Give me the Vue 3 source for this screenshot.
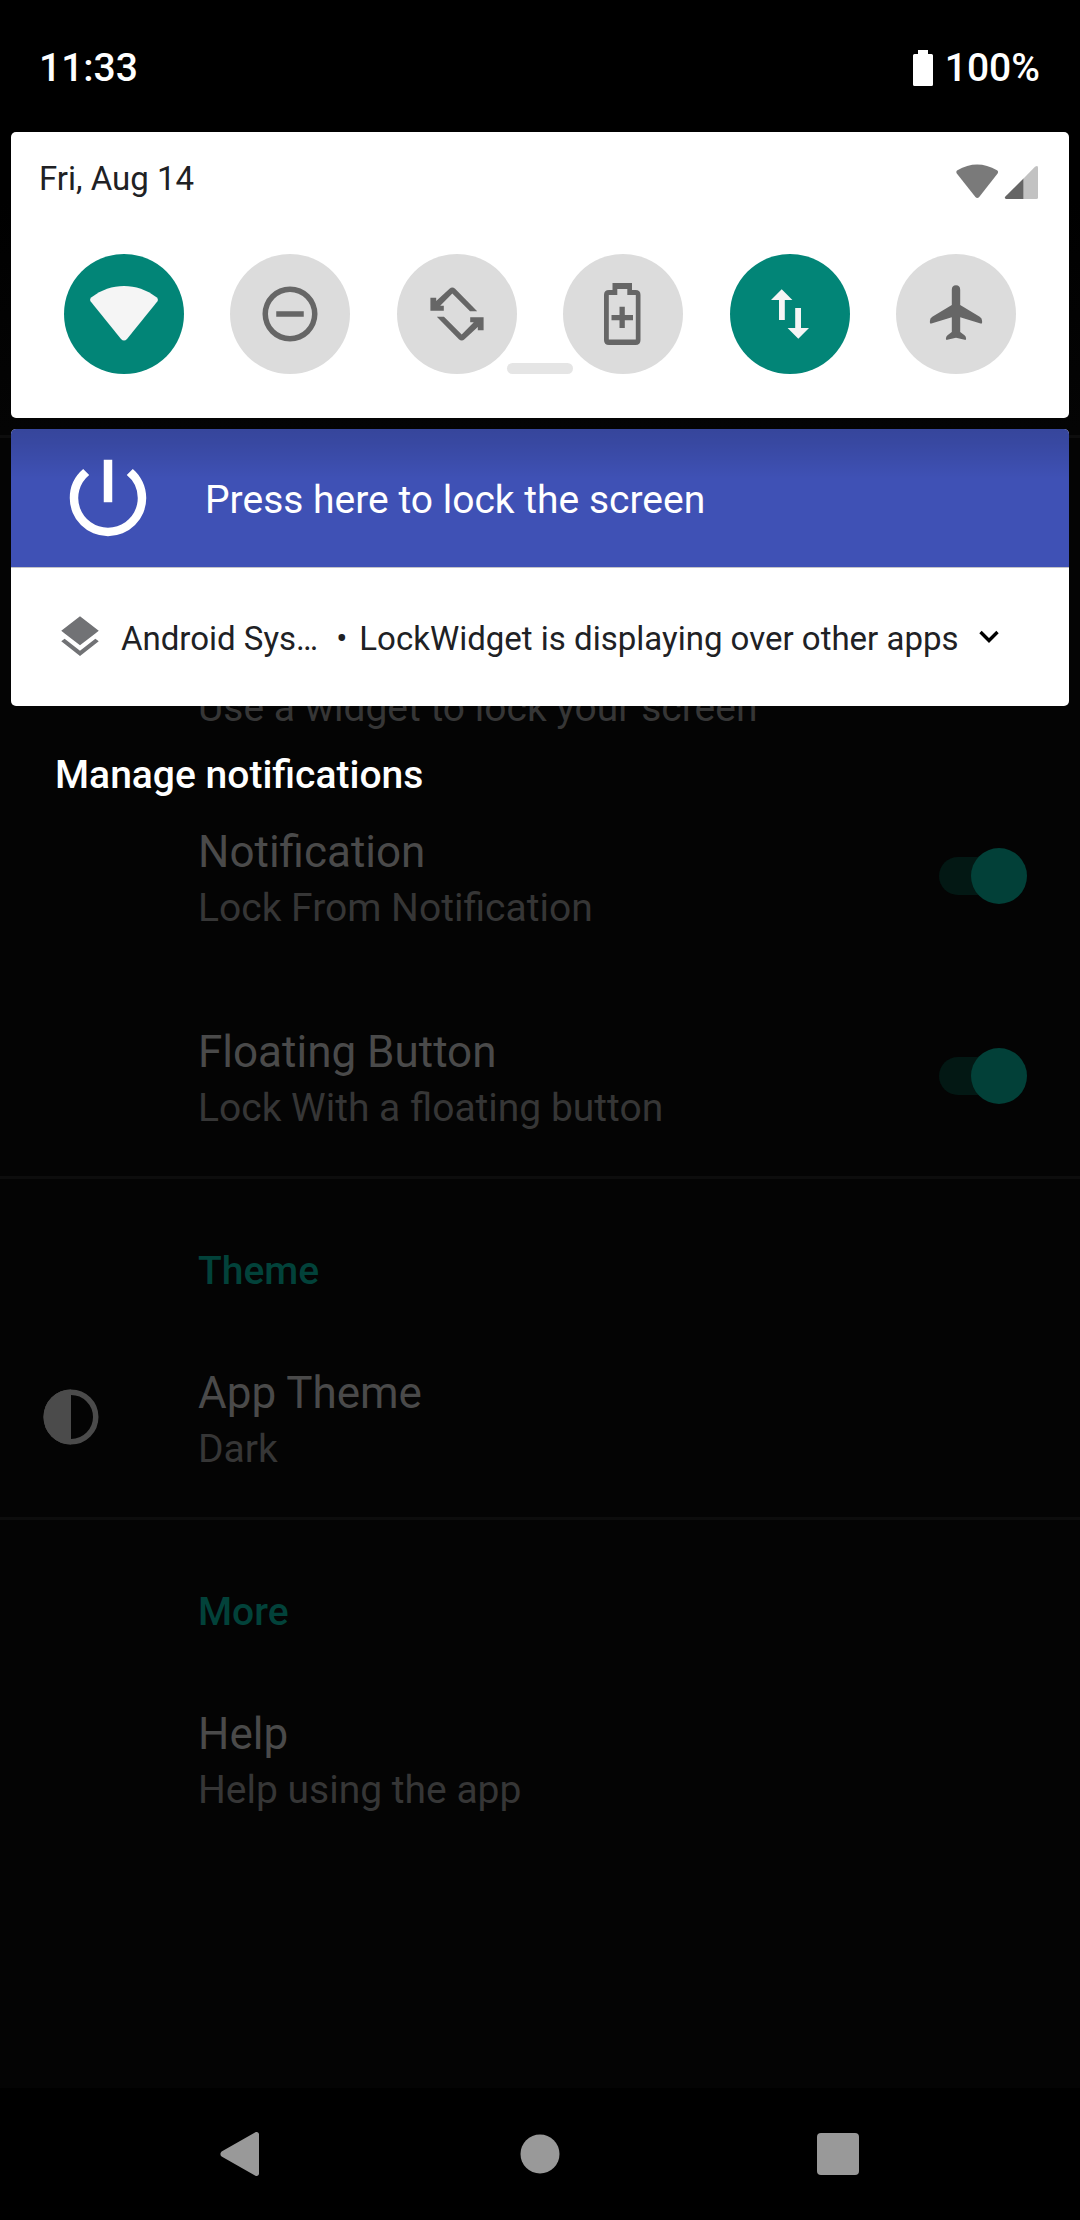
<script setup>
import { ref } from 'vue'

const tiles = ref([
  { id: 'wifi', label: 'Wi-Fi', on: true },
  { id: 'dnd', label: 'Do Not Disturb', on: false },
  { id: 'rotate', label: 'Auto-rotate', on: false },
  { id: 'saver', label: 'Battery Saver', on: false },
  { id: 'data', label: 'Mobile data', on: true },
  { id: 'airplane', label: 'Airplane mode', on: false }
])

const switches = ref([
  { id: 'notification', title: 'Notification', summary: 'Lock From Notification', on: true },
  { id: 'floating', title: 'Floating Button', summary: 'Lock With a floating button', on: true }
])
</script>

<template>
  <div class="screen">
    <main class="settings">
      <section class="group first">
        <div class="row">
          <div class="text"><span class="summary">Use a widget to lock your screen</span></div>
        </div>
        <div v-for="s in switches" :key="s.id" class="row">
          <label class="text" :for="s.id">
            <span class="title">{{ s.title }}</span>
            <span class="summary">{{ s.summary }}</span>
          </label>
          <input :id="s.id" v-model="s.on" class="switch" type="checkbox" role="switch" />
        </div>
      </section>

      <section class="group">
        <h2 class="category">Theme</h2>
        <div class="row">
          <svg class="lead" viewBox="0 0 24 24" aria-hidden="true">
            <circle cx="12" cy="12" r="9" fill="none" stroke="currentColor" stroke-width="2" />
            <path d="M12 2a10 10 0 0 0 0 20z" fill="currentColor" />
          </svg>
          <div class="text">
            <span class="title">App Theme</span>
            <span class="summary">Dark</span>
          </div>
        </div>
      </section>

      <section class="group">
        <h2 class="category">More</h2>
        <div class="row">
          <div class="text">
            <span class="title">Help</span>
            <span class="summary">Help using the app</span>
          </div>
        </div>
      </section>
    </main>

    <nav class="navbar">
      <button type="button" aria-label="Back">
        <svg viewBox="0 0 66 66"><path d="M12.6 35.6a3.4 3.4 0 0 1 0-5.2L46 11.6c2-1.2 4-.2 4 2v39c0 2.200-2 3.200-4 2z" /></svg>
      </button>
      <button type="button" aria-label="Home">
        <svg viewBox="0 0 66 66"><circle cx="33" cy="33" r="19.500" /></svg>
      </button>
      <button type="button" aria-label="Overview">
        <svg viewBox="0 0 66 66"><rect x="12" y="12" width="42" height="42" rx="4" /></svg>
      </button>
    </nav>

    <div class="shade">
      <header class="statusbar">
        <time>11:33</time>
        <div class="battery">
          <svg viewBox="0 0 20 36" aria-hidden="true"><path d="M5 0h10v4h3.500q1.500 0 1.500 1.500v29q0 1.500-1.500 1.500h-17Q0 36 0 34.500v-29Q0 4 1.500 4H5z" /></svg>
          <span>100%</span>
        </div>
      </header>

      <section class="panel">
        <div class="panel-head">
          <span class="date">Fri, Aug 14</span>
          <svg class="signal" viewBox="0 0 82 36" aria-hidden="true">
            <path d="M.8 9.500Q-.4 7.600 1.400 6.300 21-5.300 41 6.300q1.800 1.300.6 3.200L23.200 33q-1.900 2-3.800 0z" fill="#7a7a7a" />
            <path d="M67.500 14.500 79 2.800q3-2 3 .8v29.800q0 1.600-1.600 1.600H67.500z" fill="#c2c2c2" />
            <path d="M67.500 14.500V35H50.200q-2.400-.6-.8-2.600z" fill="#656565" />
          </svg>
        </div>
        <div class="tiles">
          <button v-for="t in tiles" :key="t.id" type="button" class="tile" :class="{ on: t.on }" :aria-label="t.label" :aria-pressed="t.on" @click="t.on = !t.on">
            <svg v-if="t.id === 'wifi'" class="wide" viewBox="0 0 70 66">
              <path d="M1.700 20.600Q.2 18.200 2.500 16.300C22 1.200 48 1.200 67.500 16.300q2.300 1.900.8 4.300L38 58q-3 3.200-6 0z" />
            </svg>
            <svg v-else-if="t.id === 'dnd'" viewBox="0 0 24 24">
              <path fill-rule="evenodd" d="M12 2a10 10 0 1 0 0 20 10 10 0 0 0 0-20zm0 2a8 8 0 1 1 0 16 8 8 0 0 1 0-16zM7 11h10v2H7z" />
            </svg>
            <svg v-else-if="t.id === 'rotate'" viewBox="0 0 66 66">
              <path d="M12.200 20 25.500 7.700q2.800-2.400 5.600 0L53.200 30.300H46L28.300 12.600 16.200 24.800h3.600v5H6.400V16.700h5.800z" />
              <path transform="rotate(180 33 33)" d="M12.200 20 25.500 7.700q2.800-2.400 5.600 0L53.200 30.300H46L28.300 12.600 16.200 24.800h3.600v5H6.400V16.700h5.800z" />
            </svg>
            <svg v-else-if="t.id === 'saver'" viewBox="0 0 66 66">
              <path fill-rule="evenodd" d="M22.500 2H42v7h3.500q5 0 5 5v45q0 5-5 5H19q-5 0-5-5V14q0-5 5-5h3.500zM27.300 8v6h-8.500v44.500h27V14h-8.500V8zM29.500 25.800h5.300V34H43v5.200h-8.200v7.700h-5.300v-7.700h-8V34h8z" />
            </svg>
            <svg v-else-if="t.id === 'data'" viewBox="0 0 66 66">
              <path d="M24.700 8.300 35.400 19h-7.600v20H22V19h-8z" />
              <path transform="rotate(180 33 33)" d="M24.700 8.300 35.400 19h-7.600v20H22V19h-8z" />
            </svg>
            <svg v-else viewBox="0 0 66 66">
              <path d="M33 4.200q4.200.2 4.200 4.500V24l19.500 11.800q2.400 1.500 2.400 4.200v1.400q0 1.500-1.500 1.100L37.200 36.200V51l4.300 3.200q1.700 1.300 1.600 3.600 0 1.400-1.400 1L33 56.700l-8.700 2.100q-1.400.4-1.400-1 0-2.300 1.600-3.600l4.300-3.200V36.200L8.400 42.500q-1.500.4-1.500-1.100V40q0-2.700 2.400-4.200L28.800 24V8.700q0-4.300 4.200-4.500z" />
            </svg>
          </button>
        </div>
        <div class="handle"></div>
      </section>

      <section class="notifications">
        <button type="button" class="lock">
          <svg viewBox="0 0 24 24" aria-hidden="true">
            <path d="M13 3h-2v10h2V3zm4.830 2.170-1.420 1.420A6.920 6.920 0 0 1 19 12c0 3.870-3.130 7-7 7A6.995 6.995 0 0 1 7.580 6.580L6.170 5.170A8.932 8.932 0 0 0 3 12a9 9 0 0 0 18 0c0-2.740-1.230-5.180-3.170-6.830z" />
          </svg>
          <span>Press here to lock the screen</span>
        </button>
        <button type="button" class="system">
          <svg class="layers" viewBox="0 0 24 24" aria-hidden="true">
            <path d="m11.990 18.540-7.370-5.730L3 14.070l9 7 9-7-1.630-1.270-7.380 5.740zM12 16l7.360-5.730L21 9l-9-7-9 7 1.630 1.270L12 16z" />
          </svg>
          <span class="app">Android Sys…</span>
          <span class="dot">•</span>
          <span>LockWidget is displaying over other apps</span>
          <svg class="chevron" viewBox="0 0 20 14" aria-hidden="true"><path d="M1.500 2 10 10.500 18.500 2" fill="none" stroke="#000" stroke-width="3.400" /></svg>
        </button>
      </section>

      <button type="button" class="manage">Manage notifications</button>
    </div>
  </div>
</template>

<style>
body {
  margin: 0;
  background: #000;
}
</style>

<style scoped>
.screen {
  position: relative;
  display: flex;
  flex-direction: column;
  min-height: 100vh;
  font-family: Roboto, sans-serif;
  font-size: 39px;
  line-height: 46px;
}

button {
  margin: 0;
  padding: 0;
  border: 0;
  background: none;
  color: inherit;
  font: inherit;
  text-align: left;
}

svg {
  display: block;
  flex: none;
  fill: currentColor;
}

/* Settings list behind the shade */
.settings {
  flex: 1;
  padding-top: 435px;
  background: linear-gradient(#000 200px, #040404 430px);
}

.group {
  border-top: 3px solid #0d0d0d;
}

.first {
  padding-top: 138px;
}

.category {
  margin: 0;
  padding: 69px 44px 23px 198px;
  color: #02423a;
  font-size: 39px;
  font-weight: 500;
}

.row {
  display: flex;
  align-items: center;
  min-height: 200px;
  padding-right: 53px;
}

.lead {
  width: 66px;
  height: 66px;
  margin: 0 -104px 0 38px;
  color: #4b4b4b;
}

.text {
  display: flex;
  flex: 1;
  flex-direction: column;
  justify-content: flex-end;
  box-sizing: border-box;
  height: 200px;
  padding: 0 0 38px 198px;
}

.title {
  color: #4a4a4a;
  font-size: 44px;
  line-height: 52px;
}

.summary {
  color: #363636;
  line-height: 60px;
}

.switch {
  display: grid;
  align-items: center;
  width: 88px;
  height: 56px;
  margin: 0;
  appearance: none;
}

.switch::before,
.switch::after {
  grid-area: 1 / 1;
  content: '';
}

.switch::before {
  width: 80px;
  height: 38px;
  border-radius: 19px;
  background: #031814;
}

.switch::after {
  width: 56px;
  height: 56px;
  border-radius: 50%;
  background: #4a4a4a;
}

.switch:checked::after {
  justify-self: end;
  background: #024038;
}

/* Navigation bar */
.navbar {
  display: flex;
  height: 132px;
  padding: 0 93px;
  background: #000;
  color: #999;
}

.navbar button {
  display: flex;
  flex: 1;
  align-items: center;
  justify-content: center;
}

.navbar svg {
  width: 66px;
  height: 66px;
}

/* Notification shade */
.shade {
  position: absolute;
  top: 0;
  right: 0;
  left: 0;
  padding: 0 11px;
  color: #fff;
}

.statusbar {
  display: flex;
  align-items: center;
  justify-content: space-between;
  box-sizing: border-box;
  height: 132px;
  padding: 4px 29px 0 28px;
  font-weight: 500;
}

.battery {
  display: flex;
  align-items: center;
  gap: 12px;
}

.battery svg {
  width: 20px;
  height: 36px;
}

.panel {
  padding: 22px 0 44px;
  border-radius: 5px;
  background: #fff;
}

.panel-head {
  display: flex;
  align-items: center;
  justify-content: space-between;
  height: 56px;
  padding: 0 31px 0 28px;
  color: #202124;
  font-size: 33px;
}

.date {
  padding-bottom: 6px;
}

.signal {
  width: 82px;
  height: 36px;
}

.tiles {
  display: flex;
  justify-content: space-between;
  margin-top: 44px;
  padding: 0 53px;
}

.tile {
  display: flex;
  align-items: center;
  justify-content: center;
  width: 120px;
  height: 120px;
  border-radius: 50%;
  background: #dcdcdc;
  color: #666;
}

.tile.on {
  background: #028577;
  color: #f5f5f5;
}

.tile svg {
  width: 66px;
  height: 66px;
}

.tile .wide {
  width: 70px;
}

.handle {
  width: 66px;
  height: 11px;
  margin: -11px auto 0;
  border-radius: 6px;
  background: #e5e5e5;
}

.notifications {
  margin-top: 11px;
  overflow: hidden;
  border-radius: 5px;
  background: #fff;
}

.lock {
  display: flex;
  align-items: center;
  gap: 46px;
  width: 100%;
  height: 138px;
  padding-left: 46px;
  background: linear-gradient(rgba(0, 0, 0, 0.14), rgba(0, 0, 0, 0.11) 14px, transparent 50px) #3f51b5;
}

.lock svg {
  width: 102px;
  height: 102px;
}

.lock span,
.system span {
  padding-top: 3px;
}

.system {
  display: flex;
  align-items: center;
  width: 100%;
  height: 139px;
  border-top: 1px solid #c4c4c8;
  color: #202124;
  font-size: 33px;
}

.layers {
  width: 50px;
  height: 50px;
  margin: 0 16px 0 44px;
  color: #717275;
}

.dot {
  margin: 0 12px 0 18px;
}

.chevron {
  width: 20px;
  height: 14px;
  margin-left: 20px;
}

.manage {
  margin: 46px 44px;
  font-weight: 500;
}
</style>
